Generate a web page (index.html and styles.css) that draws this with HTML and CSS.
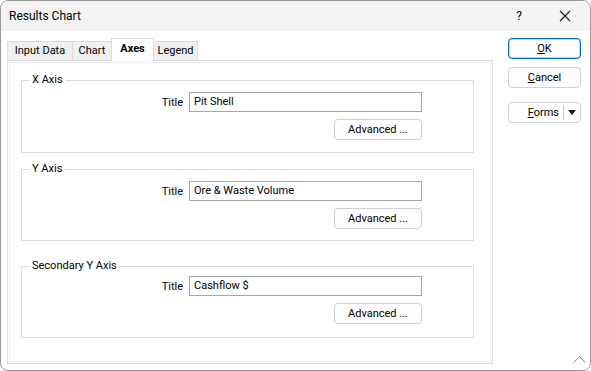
FILE: index.html
```html
<!DOCTYPE html>
<html lang="en">
<head>
    <meta charset="UTF-8">
    <title>Results Chart</title>
    <link rel="stylesheet" href="styles.css">
</head>
<body>
    <div class="window">
        <div class="titlebar">
            <span class="title">Results Chart</span>
            <span class="help">?</span>
            <span class="close">
                <svg width="12" height="12" viewBox="0 0 12 12"><path d="M1 1 L11 11 M11 1 L1 11" stroke="#1a1a1a" stroke-width="1.1" fill="none"/></svg>
            </span>
        </div>

        <div class="content">
            <div class="tab-area">
                <div class="tabs">
                    <div class="tab tab-input">Input Data</div>
                    <div class="tab tab-chart">Chart</div>
                    <div class="tab tab-axes active">Axes</div>
                    <div class="tab tab-legend">Legend</div>
                </div>

                <div class="panel">
                    <fieldset class="group group-x">
                        <legend>X Axis</legend>
                        <div class="field-row">
                            <label>Title</label>
                            <div class="text-input">Pit Shell</div>
                        </div>
                        <button class="btn btn-advanced">Advanced ...</button>
                    </fieldset>

                    <fieldset class="group group-y">
                        <legend>Y Axis</legend>
                        <div class="field-row">
                            <label>Title</label>
                            <div class="text-input">Ore &amp; Waste Volume</div>
                        </div>
                        <button class="btn btn-advanced">Advanced ...</button>
                    </fieldset>

                    <fieldset class="group group-secondary">
                        <legend>Secondary Y Axis</legend>
                        <div class="field-row">
                            <label>Title</label>
                            <div class="text-input">Cashflow $</div>
                        </div>
                        <button class="btn btn-advanced">Advanced ...</button>
                    </fieldset>
                </div>
            </div>

            <div class="actions">
                <button class="btn btn-side btn-default"><u>O</u>K</button>
                <button class="btn btn-side"><u>C</u>ancel</button>
                <div class="btn btn-side btn-split">
                    <span class="split-label"><u>F</u>orms</span>
                    <span class="split-arrow">
                        <svg width="8" height="5" viewBox="0 0 8 5"><path d="M0 0 L8 0 L4 5 Z" fill="#1a1a1a"/></svg>
                    </span>
                </div>
            </div>
        </div>

        <span class="grip">
            <svg width="13" height="7" viewBox="0 0 13 7"><path d="M0.5 6.5 L6.5 0.8 L12.5 6.5" stroke="#8a8a8a" stroke-width="1" fill="none"/></svg>
        </span>
    </div>
</body>
</html>
```

FILE: styles.css
```css
:root {
    --border: #999999;
    --line: #dcdcdc;
    --tab-bg: #f0f0f0;
    --text: #000000;
    --accent: #0067c0;
}

* {
    margin: 0;
    padding: 0;
    box-sizing: border-box;
}

body {
    width: 591px;
    height: 371px;
    background: #ffffff;
    font-family: Roboto, "Liberation Sans", sans-serif;
    font-size: 11px;
    color: var(--text);
}

.window {
    position: relative;
    width: 591px;
    height: 371px;
    border: 1px solid var(--border);
    border-radius: 8px;
    background: #ffffff;
    overflow: hidden;
}

.titlebar {
    height: 30px;
    background: #f3f3f3;
    display: flex;
    align-items: center;
    padding-left: 8px;
}

.title {
    font-size: 12px;
    flex: 1;
    padding-bottom: 1px;
}

.help {
    font-size: 12px;
    width: 46px;
    text-align: center;
    margin-right: 0;
}

.close {
    width: 46px;
    display: flex;
    justify-content: center;
    margin-right: 2px;
}

.content {
    display: flex;
    padding: 7px 0 0 6px;
}

/* tabs + page */
.tab-area {
    width: 486px;
    display: flex;
    flex-direction: column;
}

.tabs {
    display: flex;
    align-items: flex-end;
    height: 22px;
    position: relative;
    z-index: 1;
}

.tab {
    height: 19px;
    background: var(--tab-bg);
    border: 1px solid var(--line);
    border-bottom: none;
    margin-left: -1px;
    display: flex;
    align-items: center;
    justify-content: center;
    padding-bottom: 1px;
}

.tab-input { width: 66px; margin-left: 0; }
.tab-chart { width: 40px; }
.tab-axes { width: 43px; }
.tab-legend { width: 45px; }

.tab.active {
    height: 23px;
    margin-bottom: -1px;
    background: #ffffff;
    font-weight: bold;
    padding-bottom: 4px;
}

.panel {
    height: 304px;
    border: 1px solid var(--line);
    box-shadow: inset 0 0 0 1px #ffffff, inset 0 0 0 2px #ececec;
    padding: 12px 0 0 13px;
}

/* group boxes */
.group {
    width: 453px;
    border: 1px solid var(--line);
    padding: 5px 51px 12px 0;
    display: flex;
    flex-direction: column;
    align-items: flex-end;
}

.group legend {
    margin-left: 7px;
    padding: 0 3px;
    line-height: 14px;
}

.group-y {
    margin-top: 9px;
    padding-bottom: 11px;
}

.group-secondary {
    margin-top: 18px;
    padding-top: 3px;
    padding-bottom: 13px;
}

.field-row {
    display: flex;
    align-items: center;
    gap: 6px;
}

.text-input {
    width: 233px;
    height: 20px;
    border: 1px solid #a6a6a6;
    padding: 0 4px;
    line-height: 18px;
    background: #ffffff;
}

.btn {
    font-family: inherit;
    font-size: 11px;
    color: var(--text);
    background: #fdfdfd;
    border: 1px solid #d0d0d0;
    border-radius: 4px;
}

.btn-advanced {
    width: 88px;
    height: 21px;
    margin-top: 7px;
}

/* right column */
.actions {
    margin-left: 15px;
    width: 73px;
    display: flex;
    flex-direction: column;
}

.btn-side {
    height: 21px;
    margin-bottom: 8px;
}

.btn-default {
    border-color: var(--accent);
    box-shadow: inset 0 0 0 1px rgba(0, 103, 192, 0.25);
}

.btn-split {
    margin-top: 6px;
    display: flex;
    align-items: center;
}

.split-label {
    flex: 1;
    text-align: right;
    padding-right: 4px;
}

.split-arrow {
    width: 17px;
    height: 15px;
    border-left: 1px solid #c8c8c8;
    display: flex;
    align-items: center;
    justify-content: center;
}

.grip {
    position: absolute;
    right: 4px;
    bottom: 7px;
    display: flex;
}
```
